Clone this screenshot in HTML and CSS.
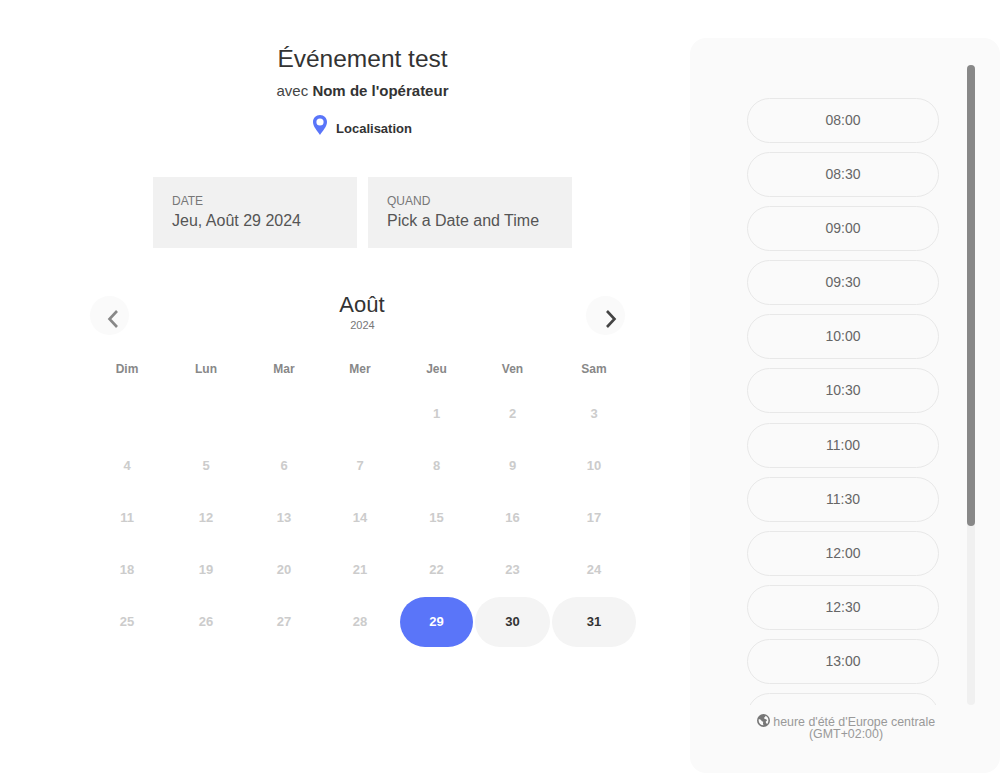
FILE: index.html
```html
<!DOCTYPE html>
<html lang="fr">
<head>
<meta charset="utf-8">
<title>Événement test</title>
<link rel="stylesheet" href="styles.css">
</head>
<body>
<div class="page">
  <main class="left">
    <header class="head">
      <h1 class="title">Événement test</h1>
      <p class="host">avec <b>Nom de l'opérateur</b></p>
      <p class="place">
        <svg class="pin" viewBox="0 0 14 20" aria-hidden="true"><path fill-rule="evenodd" d="M7 0C3 0 0 3 0 7c0 4.600 4.600 9.400 7 13 2.400-3.600 7-8.400 7-13 0-4-3-7-7-7zm0 3.400a3.600 3.600 0 1 1 0 7.200 3.600 3.600 0 0 1 0-7.200z"/></svg>
        <span>Localisation</span>
      </p>
    </header>
    <section class="cards">
      <div class="card"><span class="card-label">DATE</span><span class="card-value">Jeu, Août 29 2024</span></div>
      <div class="card"><span class="card-label">QUAND</span><span class="card-value">Pick a Date and Time</span></div>
    </section>
    <nav class="month-nav">
      <button class="arrow arrow-prev" aria-label="Précédent"><svg viewBox="0 0 12 20"><path class="prev" d="M10 2 2.500 10 10 18"/></svg></button>
      <div class="month"><div class="month-name">Août</div><div class="month-year">2024</div></div>
      <button class="arrow arrow-next" aria-label="Suivant"><svg viewBox="0 0 12 20"><path class="next" d="M2 2l7.500 8L2 18"/></svg></button>
    </nav>
    <section class="calendar">
      <div class="dow">Dim</div><div class="dow">Lun</div><div class="dow">Mar</div><div class="dow">Mer</div><div class="dow">Jeu</div><div class="dow">Ven</div><div class="dow">Sam</div>
      <div></div><div></div><div></div><div></div><div class="day">1</div><div class="day">2</div><div class="day">3</div>
      <div class="day">4</div><div class="day">5</div><div class="day">6</div><div class="day">7</div><div class="day">8</div><div class="day">9</div><div class="day">10</div>
      <div class="day">11</div><div class="day">12</div><div class="day">13</div><div class="day">14</div><div class="day">15</div><div class="day">16</div><div class="day">17</div>
      <div class="day">18</div><div class="day">19</div><div class="day">20</div><div class="day">21</div><div class="day">22</div><div class="day">23</div><div class="day">24</div>
      <div class="day">25</div><div class="day">26</div><div class="day">27</div><div class="day">28</div><div class="day selected">29</div><div class="day open">30</div><div class="day open">31</div>
    </section>
  </main>
  <aside class="panel">
    <div class="slots-wrap">
      <div class="slots">
        <button class="slot">08:00</button><button class="slot">08:30</button><button class="slot">09:00</button><button class="slot">09:30</button>
        <button class="slot">10:00</button><button class="slot">10:30</button><button class="slot">11:00</button><button class="slot">11:30</button>
        <button class="slot">12:00</button><button class="slot">12:30</button><button class="slot">13:00</button><button class="slot" aria-label="13:30"></button>
      </div>
      <div class="scrollbar"><div class="scrollbar-thumb"></div></div>
    </div>
    <p class="tz">
      <svg class="globe" viewBox="0 0 24 24" aria-hidden="true"><path d="M12 0a12 12 0 1 0 0 24 12 12 0 0 0 0-24zM3 12c0-1 .2-2 .5-3l3.500 1.500 2 3 2.500 1-.5 3 1 3.400A9 9 0 0 1 3 12zm16 6.300-2-1.300-1-2.500 2.500-2.500-1.500-2.500-3-.5-1-2.500 2-1 .5-2.300A9 9 0 0 1 21 12a9 9 0 0 1-2 6.300z"/></svg>
      heure d'été d'Europe centrale<br>(GMT+02:00)
    </p>
  </aside>
</div>
</body>
</html>
```
FILE: styles.css
```css
* { box-sizing: border-box; }
html, body { margin: 0; height: 100%; background: #fff; }
body { font-family: "Liberation Sans", Arial, sans-serif; color: #333; overflow: hidden; }
.page { display: flex; height: 773px; }

.left { width: 690px; flex: none; padding: 44px 0 0 90px; }
.head { width: 545px; text-align: center; }
.title { margin: 0; font-size: 24.500px; line-height: 30px; font-weight: 400; color: #333; }
.host { margin: 7px 0 0; font-size: 15px; line-height: 20px; color: #444; }
.host b { color: #333; }
.place { margin: 14px 0 0; height: 30px; display: flex; justify-content: center; align-items: flex-start; gap: 9px; font-size: 13px; font-weight: 700; color: #333; }
.place span { margin-top: 6px; line-height: 16px; }
.pin { width: 14px; height: 20px; fill: #5a75f9; }

.cards { display: flex; gap: 11px; width: 419px; margin: 32px 0 0 63px; }
.card { width: 204px; height: 71px; padding: 16px 19px 0; background: #f1f1f1; display: flex; flex-direction: column; }
.card-label { font-size: 12px; line-height: 16px; color: #777; }
.card-value { font-size: 16px; line-height: 20px; color: #555; margin-top: 2px; }

.month-nav { display: grid; grid-template-columns: 39px 1fr 39px; width: 535px; margin-top: 48px; height: 39px; }
.arrow { width: 39px; height: 39px; padding: 0; border: 0; border-radius: 50%; background: #fafafa; display: flex; align-items: center; justify-content: center; }
.arrow svg { width: 12px; height: 20px; margin-top: 6px; }
.arrow-prev svg { margin-left: 6px; }
.arrow-next svg { margin-left: 11px; }
.arrow path { fill: none; stroke-width: 2.600; }
.prev { stroke: #888; }
.next { stroke: #444; }
.month { text-align: center; padding-left: 9px; }
.month-name { font-size: 22px; line-height: 26px; color: #333; margin-top: -4px; }
.month-year { font-size: 11px; line-height: 13px; color: #777; margin-top: 1px; padding-left: 1px; }

.calendar { display: grid; width: 546px; margin-top: 17px; column-gap: 2px; row-gap: 2px; grid-template-columns: 74px 80px 72px 76px 73px 75px 84px; grid-template-rows: 35px repeat(5, 50px); }
.dow, .day { display: flex; align-items: center; justify-content: center; font-size: 12px; font-weight: 700; }
.dow { color: #888; padding-bottom: 1px; }
.day { font-size: 13px; color: #ccc; border-radius: 25px; padding-bottom: 2px; }
.day.selected { background: #5a75f9; color: #fff; }
.day.open { background: #f4f4f4; color: #333; }

.panel { flex: none; width: 310px; margin-top: 38px; height: 735px; padding: 27px 25px 0 29px; background: #fafafa; border-radius: 16px; }
.slots-wrap { display: flex; height: 640px; }
.slots { flex: 1; min-width: 0; overflow: hidden; padding-top: 33px; display: flex; flex-direction: column; align-items: center; gap: 9.100px; }
.scrollbar { flex: none; width: 8px; background: #f0f0f0; border-radius: 4px; }
.scrollbar-thumb { height: 461px; background: #888; border-radius: 4px; }
.slot { flex: none; width: 192px; height: 45px; padding: 0 0 1px; border: 1px solid #e8e8e8; border-radius: 23px; background: transparent; font-family: inherit; font-size: 14px; color: #666; }
.tz { margin: 9px 0 0; padding-right: 2px; text-align: center; font-size: 12.400px; line-height: 12px; color: #999; }
.globe { width: 13px; height: 13px; fill: #777; vertical-align: -1px; }
```
